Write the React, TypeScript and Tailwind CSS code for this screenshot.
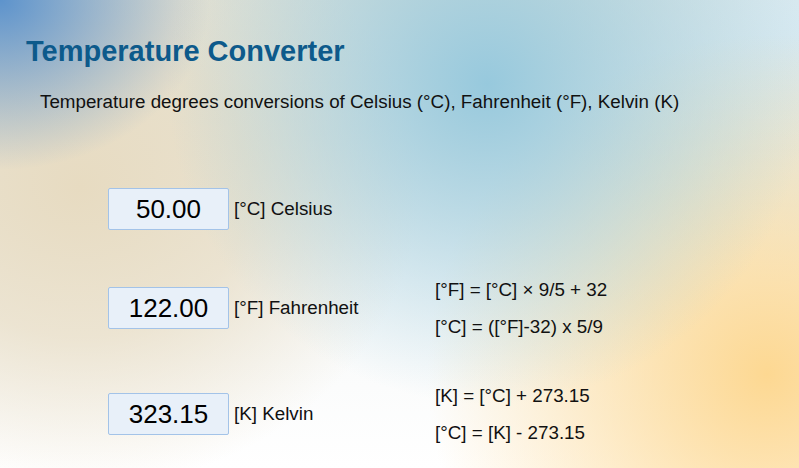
import React from "react";

type Row = { value: string; label: string; formulas: string[]; top: string };

const rows: Row[] = [
  { value: "50.00", label: "[°C] Celsius", formulas: [], top: "mt-[75px]" },
  {
    value: "122.00",
    label: "[°F] Fahrenheit",
    formulas: ["[°F] = [°C] × 9/5 + 32", "[°C] = ([°F]-32) x 5/9"],
    top: "mt-[57px]",
  },
  {
    value: "323.15",
    label: "[K] Kelvin",
    formulas: ["[K] = [°C] + 273.15", "[°C] = [K] - 273.15"],
    top: "mt-[64px]",
  },
];

function ConvRow({ row }: { row: Row }) {
  return (
    <div className={`flex items-center h-[42px] ${row.top}`}>
      <input
        readOnly
        value={row.value}
        className="w-[121px] h-[42px] ml-[108px] shrink-0 rounded-[2px] border border-[#a3c3e8] bg-[#e8f0f9] text-center text-[26px] text-black outline-none"
      />
      <span className="w-[206px] shrink-0 pl-[5px] text-[18.8px] text-[#111]">{row.label}</span>
      <div className="flex flex-col gap-[15px] text-[18.8px] text-[#111]">
        {row.formulas.map((f) => (
          <span key={f} className="leading-[22px] whitespace-nowrap">{f}</span>
        ))}
      </div>
    </div>
  );
}

export default function App() {
  return (
    <div
      className="w-[799px] h-[468px] overflow-hidden font-['Liberation_Sans',Arial,sans-serif] bg-white bg-[radial-gradient(ellipse_210px_170px_at_0%_0%,#5d93cc_0%,rgba(93,147,204,0)_100%),radial-gradient(circle_320px_at_61%_18%,#97c9dd_0%,rgba(151,201,221,0.55)_45%,rgba(151,201,221,0)_100%),radial-gradient(circle_340px_at_96%_80%,#fdd892_0%,rgba(253,216,146,0.6)_40%,rgba(253,216,146,0)_100%),radial-gradient(ellipse_340px_300px_at_10%_40%,#e7dbc1_0%,rgba(231,219,193,0.7)_50%,rgba(231,219,193,0)_100%),radial-gradient(circle_260px_at_100%_5%,#d6e9f1_0%,rgba(214,233,241,0)_100%),linear-gradient(180deg,#e2e4dc_0%,#f6f8f8_60%,#ffffff_100%)]"
    >
      <h1 className="pt-[34px] pl-[26px] text-[29px] leading-[34px] font-bold text-[#0d5a8b]">
        Temperature Converter
      </h1>
      <p className="mt-[23px] pl-[40px] text-[18.8px] leading-[22px] text-[#111]">
        Temperature degrees conversions of Celsius (°C), Fahrenheit (°F), Kelvin (K)
      </p>
      {rows.map((r) => (
        <ConvRow key={r.value} row={r} />
      ))}
    </div>
  );
}
